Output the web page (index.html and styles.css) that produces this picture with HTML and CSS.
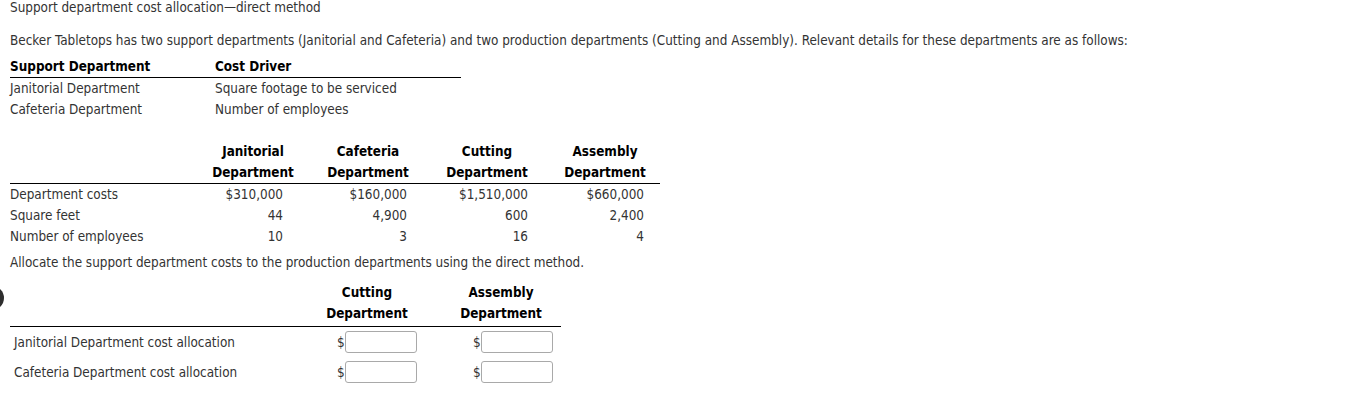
FILE: index.html
```html
<!DOCTYPE html>
<html>
<head>
<meta charset="utf-8">
<link rel="stylesheet" href="styles.css">
</head>
<body>
<div class="page">
  <div class="title">Support department cost allocation—direct method</div>
  <p class="intro">Becker Tabletops has two support departments (Janitorial and Cafeteria) and two production departments (Cutting and Assembly). Relevant details for these departments are as follows:</p>

  <table class="t1">
    <colgroup><col class="t1c0"><col class="t1c1"></colgroup>
    <thead>
      <tr><th>Support Department</th><th>Cost Driver</th></tr>
    </thead>
    <tbody>
      <tr><td>Janitorial Department</td><td>Square footage to be serviced</td></tr>
      <tr><td>Cafeteria Department</td><td>Number of employees</td></tr>
    </tbody>
  </table>

  <table class="t2">
    <colgroup><col class="t2c0"><col class="t2c1"><col class="t2c2"><col class="t2c3"><col class="t2c4"></colgroup>
    <thead>
      <tr>
        <th></th>
        <th class="h">Janitorial<br>Department</th>
        <th class="h">Cafeteria<br>Department</th>
        <th class="h">Cutting<br>Department</th>
        <th class="h h4">Assembly<br>Department</th>
      </tr>
    </thead>
    <tbody>
      <tr><td>Department costs</td><td class="n">$310,000</td><td class="n">$160,000</td><td class="n n3">$1,510,000</td><td class="n n3">$660,000</td></tr>
      <tr><td>Square feet</td><td class="n">44</td><td class="n">4,900</td><td class="n n3">600</td><td class="n n3">2,400</td></tr>
      <tr><td>Number of employees</td><td class="n">10</td><td class="n">3</td><td class="n n3">16</td><td class="n n3">4</td></tr>
    </tbody>
  </table>

  <p class="instr">Allocate the support department costs to the production departments using the direct method.</p>

  <table class="t3">
    <colgroup><col class="t3c0"><col class="t3c1"><col class="t3c2"></colgroup>
    <thead>
      <tr>
        <th></th>
        <th class="h hc1">Cutting<br>Department</th>
        <th class="h hc2">Assembly<br>Department</th>
      </tr>
    </thead>
    <tbody>
      <tr>
        <td class="lbl">Janitorial Department cost allocation</td>
        <td class="in1"><span class="cur">$</span><input class="box" type="text"></td>
        <td class="in2"><span class="cur">$</span><input class="box" type="text"></td>
      </tr>
      <tr>
        <td class="lbl">Cafeteria Department cost allocation</td>
        <td class="in1"><span class="cur">$</span><input class="box" type="text"></td>
        <td class="in2"><span class="cur">$</span><input class="box" type="text"></td>
      </tr>
    </tbody>
  </table>
</div>
<div class="edge"></div>
</body>
</html>
```

FILE: styles.css
```css
html, body {
  margin: 0;
  padding: 0;
  background: #fff;
}
body {
  font-family: "DejaVu Sans Condensed", "DejaVu Sans", sans-serif;
  font-size: 13.4px;
  color: #333;
  position: relative;
  overflow: hidden;
  height: 395px;
}
.page {
  padding: 1px 0 0 10px;
}
.title {
  line-height: 16px;
  margin-top: -1px;
}
.intro {
  margin: 17px 0 0;
  line-height: 16px;
}
table {
  border-collapse: collapse;
  border-spacing: 0;
  table-layout: fixed;
}
th, td {
  padding: 0;
  line-height: 21px;
  height: 21px;
  white-space: nowrap;
}
th {
  font-weight: bold;
  color: #000;
  text-align: left;
}
thead tr {
  border-bottom: 1px solid #000;
}
.t1 {
  margin-top: 7px;
  width: 451px;
}
.t1c0 { width: 205px; }
.t1c1 { width: 246px; }

.t2 {
  margin-top: 21px;
  width: 650px;
}
.t2c0 { width: 190px; }
.t2c1 { width: 106px; }
.t2c2 { width: 124px; }
.t2c3 { width: 114px; }
.t2c4 { width: 116px; }
.h {
  text-align: center;
}
.h4 {
  padding-left: 6px;
}
.n {
  text-align: right;
  padding-right: 23px;
}
.n3 {
  padding-right: 16px;
}

.instr {
  margin: 5px 0 0;
  line-height: 21px;
}

.t3 {
  margin-top: 9px;
  width: 551px;
}
.t3c0 { width: 312px; }
.t3c1 { width: 110px; }
.t3c2 { width: 129px; }
.t3 thead th {
  padding-bottom: 2px;
}
.hc1 { padding-right: 20px; }
.hc2 { padding-left: 9px; }
.t3 tbody td {
  height: 30px;
  line-height: 30px;
}
.t3 tbody td.lbl {
  padding: 2px 0 0 4px;
  height: 28px;
  line-height: 28px;
}
.in1, .in2 {
  vertical-align: middle;
}
.in1 { padding-left: 15px; }
.in2 { padding-left: 41px; }
.cur {
  display: inline-block;
  width: 8px;
  vertical-align: middle;
  line-height: 16px;
  position: relative;
  top: 1px;
}
.box {
  box-sizing: border-box;
  width: 72px;
  height: 22px;
  border: 1px solid #a9a9a9;
  border-radius: 3px;
  margin: 0;
  padding: 0 3px;
  vertical-align: middle;
  font: inherit;
  background: #fff;
}
.edge {
  position: absolute;
  left: -20px;
  top: 286px;
  width: 24px;
  height: 24px;
  border-radius: 50%;
  background: #2e2e2e;
}
```
